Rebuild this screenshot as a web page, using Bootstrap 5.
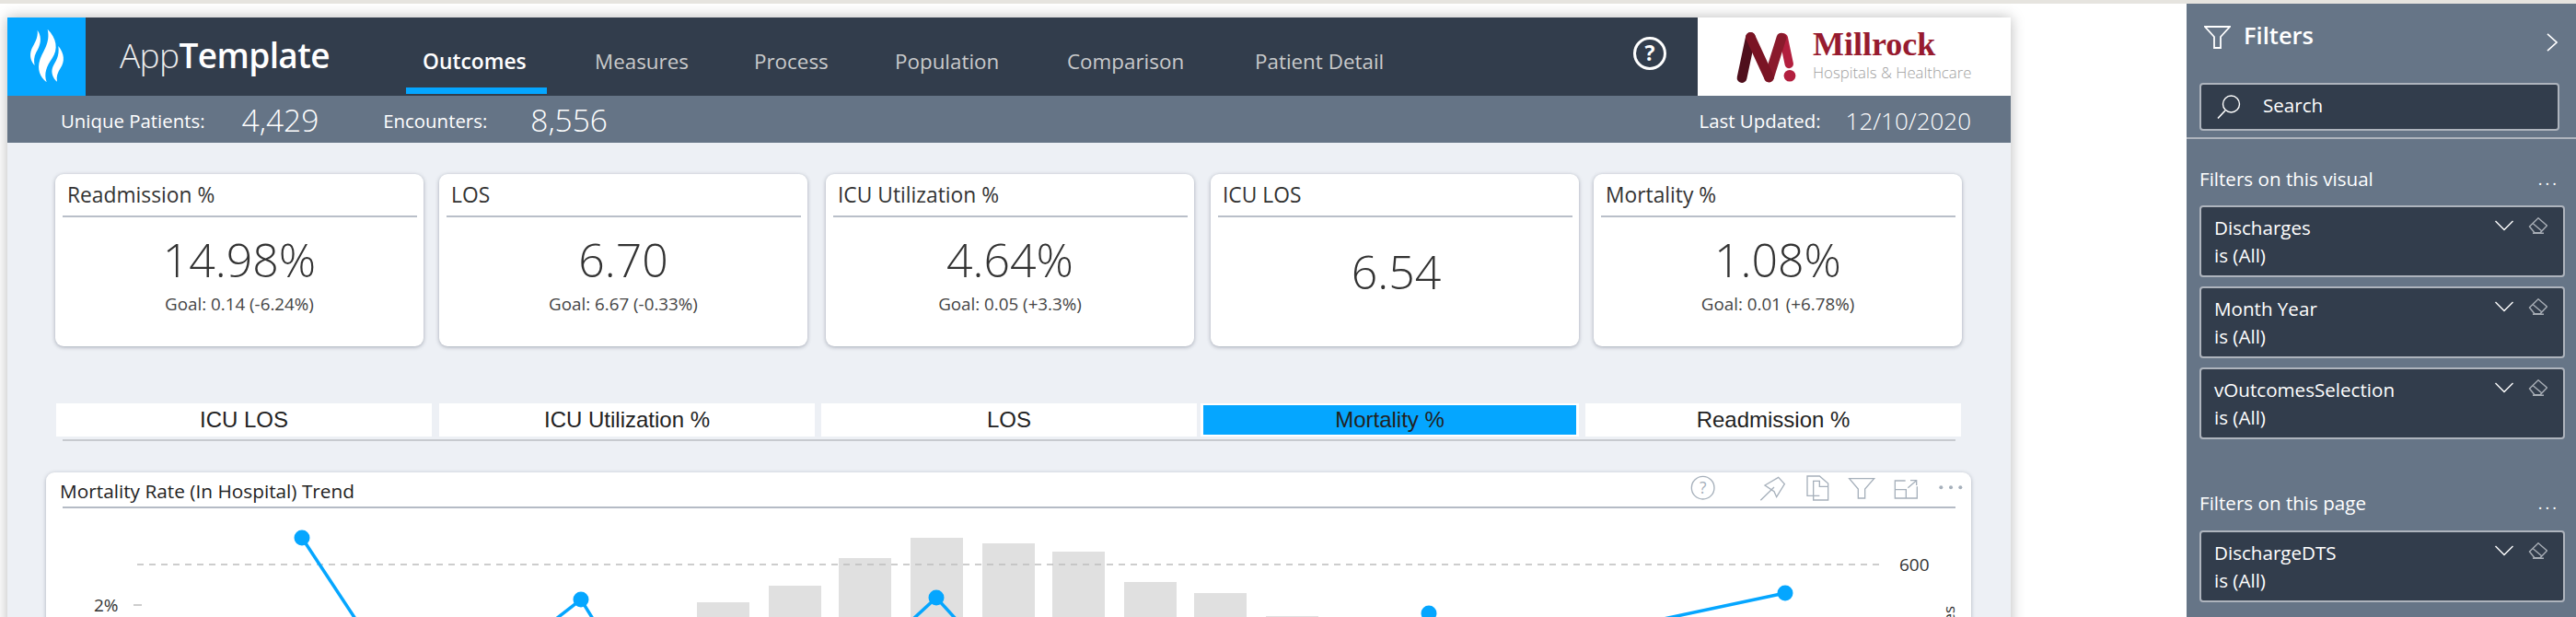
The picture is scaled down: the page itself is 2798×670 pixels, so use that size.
<!DOCTYPE html>
<html lang="en">
<head>
<meta charset="utf-8">
<title>AppTemplate</title>
<link href="https://cdn.jsdelivr.net/npm/bootstrap@5.3.0/dist/css/bootstrap.min.css" rel="stylesheet">
<style>
html,body{height:670px;overflow:hidden;background:#fff;font-family:"Open Sans","Noto Sans",sans-serif}
.topline{height:4px;background:#e6e4df}
.shell{height:666px}
.reportwrap{width:2375px;padding:15px 0 0 8px;overflow:hidden}
.report{width:2176px;height:700px;box-shadow:0 0 14px rgba(0,0,0,.28);background:#edf0f5}
.head{height:85px;background:#323d4c}
.logoblock{width:85px;height:85px;background:#05a6ff}
.brand{width:311px;margin-left:37px;font-size:37px;line-height:81px;color:#eee;font-weight:300;letter-spacing:-.6px}
.brand b{font-weight:600;color:#fff}
.tracks{display:grid;grid-template-columns:187px 173px 153px 187px 204px auto}
.track{display:block;height:83px;padding:33px 18px 0;font-size:22.4px;line-height:30px;color:#c9cacb;text-decoration:none;border-bottom:7px solid transparent}
.track.on{width:153px;color:#fff;font-weight:600;font-size:22.8px;border-bottom-color:#05a6ff}
.helpbtn{margin-right:33px;margin-top:-8px}
.hospital{width:340px;height:85px;background:#fff;padding-left:39px}
.hlogo{margin-right:14px}
.hname{font-family:"Liberation Serif",serif;font-weight:700;font-size:36px;line-height:31px;color:#971b2f}
.hsub{font-size:16.8px;line-height:24px;color:#a0a0a0;font-weight:300;margin-top:3px;white-space:nowrap}
.sub{height:51px;background:#657486;color:#fff;font-size:20.4px;padding:0 43px 0 58px}
.sublabel{padding-top:4px}
.subnum{font-size:33.5px;font-weight:300;line-height:44px}
.subdate{font-size:26px;font-weight:300;line-height:44px;margin-left:27px;padding-top:2px}
.gapa{margin-left:40px}
.gapb{margin-left:70px}
.gapc{margin-left:47px}
.canvasarea{padding:34px 0 0 52px}
.kpis{display:grid;grid-template-columns:417px 420px 418px 416px 401px}
.kpi{width:400px;height:187px;background:#fff;border:0;border-radius:9px;box-shadow:0 1px 4px rgba(70,80,100,.45);position:relative}
.kpihead{height:47px;margin:0 7px 0 8px;padding:7px 5px 0;font-size:22.8px;line-height:32px;color:#333;border-bottom:2px solid #b9bfc9}
.kpival{font-size:50px;font-weight:300;line-height:64px;color:#333;margin-top:14px}
.kpigoal{font-size:18.8px;line-height:24px;color:#444;margin-top:4px}
.kpival.solo{margin-top:27px;padding-left:3px}
.tabs{display:grid;grid-template-columns:416px 415px 412px 418px 408px;margin:62px 0 0 1px}
.tabbtn{width:408px;height:36px;background:#fff;font-family:"Liberation Sans",sans-serif;font-size:24px;line-height:36px;color:#222;text-align:center}
.tabbtn.sel{width:411px;padding:2px 3px}
.tabbtn.sel span{display:block;height:32px;line-height:32px;background:#05a6ff}
.tabline{height:2px;background:#c7cacf;margin:3px 0 0 8px;width:2056px}
.chartcard{width:2091px;height:300px;margin:34px 0 0 -10px;background:#fff;border:0;border-radius:9px;box-shadow:0 1px 4px rgba(70,80,100,.4)}
.charthead{height:39px;margin:0 17px 0 18px;border-bottom:2px solid #b5bbc5;position:relative}
.charttitle{font-size:20.8px;line-height:28px;padding-top:6px;margin-left:-3px;color:#222}
.charticons{margin-right:-9px}
.pane{width:423px;height:666px;background:#667587;color:#fff;font-size:20.6px}
.panehead{height:86px;padding:24px 20px 0 19px}
.panetitle{font-size:25.5px;font-weight:600;line-height:32px;margin-left:14px;margin-top:-6px}
.searchbox{width:391px;height:52px;margin-left:14px;background:#323d4c;border:2px solid #aeb4bd;border-radius:4px;padding-left:17px}
.searchbox span{margin-left:24px;margin-bottom:3px}
.panediv{height:2px;background:#aeb4bd;margin-top:7px}
.secthead{width:391px;height:30px;line-height:30px;margin:28px 0 14px 14px}
.secthead.second{margin:54px 0 15px 14px}
.dots{letter-spacing:3px;font-size:18px;line-height:24px;margin-top:3px}
.fcard{width:397px;height:78px;margin:0 0 10px 14px;background:#323d4c;border:2px solid #aeb4bd;border-radius:4px;padding:7px 17px 0 14px;color:#fff;line-height:30px}
.fcard svg{margin-top:4px}
</style>
</head>
<body>
<svg width="0" height="0" class="position-absolute">
<symbol id="ficons" viewBox="0 0 57 18">
<path d="M.5 4l9.5 9.500L19.500 4" fill="none" stroke="#fff" stroke-width="1.400"/>
<path d="M37.500 10L47 .8 56.500 9 49 16.800h-6zM41 6.500l10 8.500M41 17.300h12" fill="none" stroke="#a8aeb6" stroke-width="1.400"/>
</symbol>
</svg>
<div class="topline"></div>
<div class="shell d-flex">
<div class="reportwrap">
<div class="report">
<header class="head d-flex">
<div class="logoblock">
<svg width="85" height="85" viewBox="24 57 255 255"><g fill="#fff"><path d="M122 98C140 125 130 150 118 170C110 185 110 200 113 213C100 200 95 180 103 160C112 140 125 125 122 98Z"/><path d="M155 95C185 125 190 160 170 190C152 215 142 240 152 268C130 250 120 225 130 195C140 165 165 140 155 95Z"/><path d="M190 150C210 175 212 200 197 222C187 237 183 250 186 266C172 255 165 235 172 218C180 200 195 185 190 150Z"/></g></svg>
</div>
<div class="brand">App<b>Template</b></div>
<nav class="tracks">
<div><a class="track on" href="#">Outcomes</a></div>
<div><a class="track" href="#">Measures</a></div>
<div><a class="track" href="#">Process</a></div>
<div><a class="track" href="#">Population</a></div>
<div><a class="track" href="#">Comparison</a></div>
<div><a class="track" href="#">Patient Detail</a></div>
</nav>
<div class="ms-auto d-flex align-items-center">
<svg class="helpbtn" width="38" height="38" viewBox="0 0 38 38"><circle cx="19" cy="19" r="16.500" fill="none" stroke="#fff" stroke-width="3"/><text x="19" y="27" text-anchor="middle" fill="#fff" font-size="23" font-weight="700" font-family="Open Sans, sans-serif">?</text></svg>
<div class="hospital d-flex align-items-center">
<svg width="72" height="62" viewBox="310 90 215 185" class="flex-shrink-0 hlogo"><g fill="none" stroke-linecap="round"><path d="M472 120L490 205" stroke="#b21f3e" stroke-width="28"/><path d="M465 120L425 248" stroke="#8a1a2c" stroke-width="32"/><path d="M365 118L337 250" stroke="#4f0f1c" stroke-width="32"/><path d="M365 118L425 248" stroke="#7a1424" stroke-width="32"/></g><circle cx="492" cy="243" r="19" fill="#b21f3e"/></svg>
<div>
<div class="hname">Millrock</div>
<div class="hsub">Hospitals &amp; Healthcare</div>
</div>
</div>
</div>
</header>
<div class="sub d-flex align-items-center">
<span class="sublabel">Unique Patients:</span><span class="subnum gapa">4,429</span>
<span class="sublabel gapb">Encounters:</span><span class="subnum gapc">8,556</span>
<span class="sublabel ms-auto">Last Updated:</span><span class="subdate">12/10/2020</span>
</div>
<main class="canvasarea">
<section class="kpis">
<div class="card kpi text-center"><div class="kpihead text-start">Readmission %</div><div class="kpival">14.98%</div><div class="kpigoal">Goal: 0.14 (-6.24%)</div></div>
<div class="card kpi text-center"><div class="kpihead text-start">LOS</div><div class="kpival">6.70</div><div class="kpigoal">Goal: 6.67 (-0.33%)</div></div>
<div class="card kpi text-center"><div class="kpihead text-start">ICU Utilization %</div><div class="kpival">4.64%</div><div class="kpigoal">Goal: 0.05 (+3.3%)</div></div>
<div class="card kpi text-center"><div class="kpihead text-start">ICU LOS</div><div class="kpival solo">6.54</div></div>
<div class="card kpi text-center"><div class="kpihead text-start">Mortality %</div><div class="kpival">1.08%</div><div class="kpigoal">Goal: 0.01 (+6.78%)</div></div>
</section>
<section class="tabs">
<div class="tabbtn">ICU LOS</div>
<div class="tabbtn">ICU Utilization %</div>
<div class="tabbtn">LOS</div>
<div class="tabbtn sel"><span>Mortality %</span></div>
<div class="tabbtn">Readmission %</div>
</section>
<div class="tabline"></div>
<section class="card chartcard">
<div class="charthead d-flex justify-content-between">
<div class="charttitle">Mortality Rate (In Hospital) Trend</div>
<svg class="charticons" width="300" height="33" viewBox="40 50 900 99" fill="none" stroke="#a6b0bb" stroke-width="4">
<circle cx="90" cy="100" r="37"/><text x="90" y="119" text-anchor="middle" font-size="52" fill="#a6b0bb" stroke="none" font-family="Open Sans, sans-serif">?</text>
<path d="M278 141L322 98M292 92L336 66 356 88 330 130 322 112 292 92Z"/>
<path d="M470 126H430V62H470L498 86V140H450V78H470V96H498"/>
<path d="M567 70H648L618 104V134H596V104Z"/>
<path d="M750 77H716V134H788V96M716 106H752V134M758 100L786 76M766 76H786V92"/>
<g fill="#a6b0bb" stroke="none"><circle cx="866" cy="99" r="6"/><circle cx="898" cy="99" r="6"/><circle cx="929" cy="99" r="6"/></g>
</svg>
</div>
<svg width="2091" height="118" viewBox="50 552 2091 118" class="d-block">
<g fill="#e0e0e0"><rect x="757" y="654" width="57" height="20"/><rect x="835" y="636" width="57" height="40"/><rect x="911" y="606" width="57" height="70"/><rect x="989" y="584" width="57" height="90"/><rect x="1067" y="590" width="57" height="90"/><rect x="1143" y="599" width="57" height="80"/><rect x="1221" y="632" width="57" height="40"/><rect x="1297" y="644" width="57" height="30"/><rect x="1375" y="669" width="57" height="5"/></g>
<path d="M149 613H2047" stroke="#bdbdbd" stroke-width="1.500" stroke-dasharray="7 6"/>
<path d="M145 657H154" stroke="#bdbdbd" stroke-width="1.500"/>
<g fill="none" stroke="#05a6ff" stroke-width="3.500"><path d="M328 584L386 672"/><path d="M604 672L631 651L644 672"/><path d="M992 672L1017 649L1038 672"/><path d="M1807 672L1939 644"/></g>
<g fill="#05a6ff"><circle cx="328" cy="584" r="8.500"/><circle cx="631" cy="651" r="8.500"/><circle cx="1017" cy="649" r="8.500"/><circle cx="1552" cy="666" r="8.500"/><circle cx="1939" cy="644" r="8.500"/></g>
<g fill="#333" font-family="Open Sans, sans-serif" font-size="19"><text x="102" y="664">2%</text><text x="2063" y="620">600</text><text transform="translate(2123 658) rotate(-90)" text-anchor="end" font-size="17">Discharges</text></g>
</svg>
</section>
</main>
</div>
</div>
<aside class="pane">
<div class="panehead d-flex align-items-start">
<svg width="29" height="25" viewBox="0 0 29 25"><path d="M1 1H28L18 12V24H11V12Z" fill="none" stroke="#fff" stroke-width="1.800"/></svg>
<div class="panetitle">Filters</div>
<svg class="ms-auto mt-2" width="12" height="20" viewBox="0 0 12 20"><path d="M1 .8L11 10 1 19.200" fill="none" stroke="#fff" stroke-width="1.600"/></svg>
</div>
<div class="searchbox d-flex align-items-center">
<svg width="26" height="26" viewBox="0 0 26 26"><circle cx="15.500" cy="10" r="9" fill="none" stroke="#fff" stroke-width="1.400"/><path d="M9 17L1 25.500" stroke="#fff" stroke-width="1.600"/></svg>
<span>Search</span>
</div>
<div class="panediv"></div>
<div class="secthead d-flex justify-content-between"><span>Filters on this visual</span><span class="dots">...</span></div>
<div class="card fcard flex-row justify-content-between"><div>Discharges<br>is (All)</div><svg width="57" height="18"><use href="#ficons"/></svg></div>
<div class="card fcard flex-row justify-content-between"><div>Month Year<br>is (All)</div><svg width="57" height="18"><use href="#ficons"/></svg></div>
<div class="card fcard flex-row justify-content-between"><div>vOutcomesSelection<br>is (All)</div><svg width="57" height="18"><use href="#ficons"/></svg></div>
<div class="secthead second d-flex justify-content-between"><span>Filters on this page</span><span class="dots">...</span></div>
<div class="card fcard flex-row justify-content-between"><div>DischargeDTS<br>is (All)</div><svg width="57" height="18"><use href="#ficons"/></svg></div>
</aside>
</div>
<script src="https://cdn.jsdelivr.net/npm/bootstrap@5.3.0/dist/js/bootstrap.bundle.min.js"></script>
</body>
</html>
